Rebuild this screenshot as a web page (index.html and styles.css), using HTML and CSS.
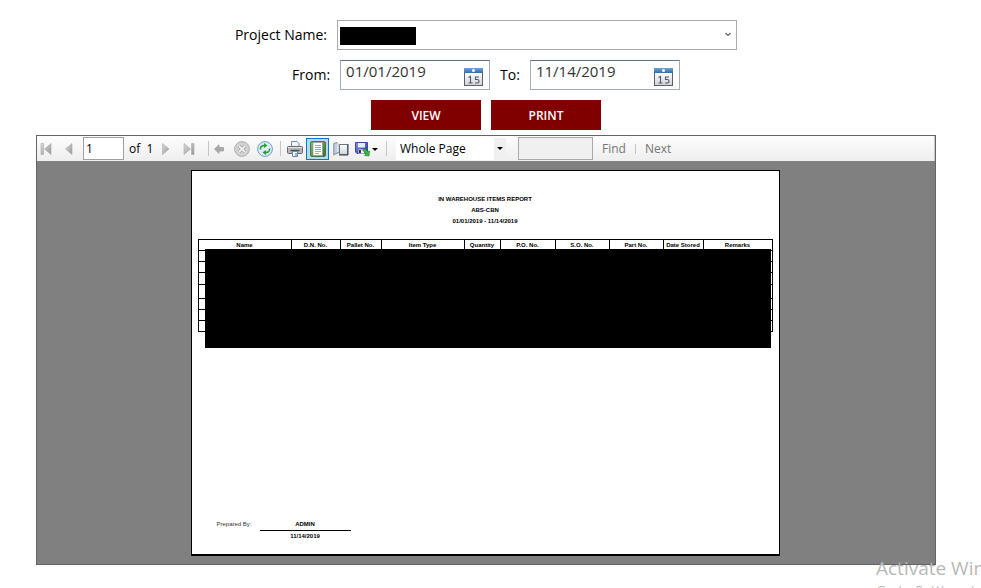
FILE: index.html
```html
<!DOCTYPE html>
<html lang="en">
<head>
<meta charset="utf-8">
<title>In Warehouse Items Report</title>
<link rel="stylesheet" href="styles.css">
</head>
<body>
<svg class="defs" aria-hidden="true">
  <defs>
    <linearGradient id="gray" x1="0" y1="0" x2="1" y2="1"><stop offset="0" stop-color="#dcdcdc"/><stop offset="1" stop-color="#969696"/></linearGradient>
    <linearGradient id="bar" x1="0" y1="0" x2="0" y2="1"><stop offset="0" stop-color="#6fa5d6"/><stop offset="1" stop-color="#336da8"/></linearGradient>
    <linearGradient id="paper" x1="0" y1="0" x2="0" y2="1"><stop offset="0" stop-color="#fff"/><stop offset="1" stop-color="#cfd3d8"/></linearGradient>
    <linearGradient id="green" x1="0" y1="0" x2="1" y2="1"><stop offset="0" stop-color="#8dc178"/><stop offset="1" stop-color="#2f6b2a"/></linearGradient>
    <linearGradient id="disk" x1="0" y1="0" x2="1" y2="1"><stop offset="0" stop-color="#8d95e6"/><stop offset="1" stop-color="#2a2f94"/></linearGradient>
    <symbol id="calendar" viewBox="0 0 19 18">
      <rect x="0.5" y="4.5" width="18" height="13" fill="url(#paper)" stroke="#5c5f64"/>
      <rect width="19" height="5" fill="url(#bar)"/>
      <circle cx="9.5" cy="2.500" r="1.500" fill="#fff"/>
      <path d="M4.500 9.500L6.500 8.500V15M4.500 15H8.500M15 9H11.500V11.500H13.500Q15 11.500 15 13.200T13.500 15H11" fill="none" stroke="#55585d" stroke-width="1.100"/>
    </symbol>
  </defs>
</svg>
<main class="page">
  <form class="filters">
    <div class="row">
      <label for="project">Project Name:</label>
      <div class="project">
        <select id="project"><option></option></select>
        <span class="project-mask"></span>
        <svg class="chevron" width="6" height="5" viewBox="0 0 6 5"><path d="M0.500 1L3 3.500L5.500 1" fill="none" stroke="#606060" stroke-width="1.200"/></svg>
      </div>
    </div>
    <div class="row">
      <label for="from">From:</label>
      <div class="date"><input id="from" type="text" value="01/01/2019"><button type="button" aria-label="Choose start date"><svg width="19" height="18"><use href="#calendar"/></svg></button></div>
      <label for="to">To:</label>
      <div class="date"><input id="to" type="text" value="11/14/2019"><button type="button" aria-label="Choose end date"><svg width="19" height="18"><use href="#calendar"/></svg></button></div>
    </div>
    <div class="row actions">
      <button type="button">VIEW</button>
      <button type="button">PRINT</button>
    </div>
  </form>

  <section class="viewer">
    <div class="toolbar">
      <div class="nav">
        <button type="button" aria-label="First page"><svg width="12" height="14" viewBox="0 0 12 14"><path d="M1 1.500H3.500V12.500H1ZM11 1.500V12.500L4.500 7Z" fill="url(#gray)" stroke="#aaa" stroke-width=".6"/></svg></button>
        <button type="button" aria-label="Previous page"><svg width="12" height="14" viewBox="0 0 12 14"><path d="M9 1.500V12.500L2.500 7Z" fill="url(#gray)" stroke="#aaa" stroke-width=".6"/></svg></button>
        <input class="page-no" type="text" value="1" aria-label="Current page">
        <span class="count">of&nbsp; 1</span>
        <button type="button" aria-label="Next page"><svg width="12" height="14" viewBox="0 0 12 14"><path d="M2.500 1.500V12.500L9 7Z" fill="url(#gray)" stroke="#aaa" stroke-width=".6"/></svg></button>
        <button type="button" aria-label="Last page"><svg width="12" height="14" viewBox="0 0 12 14"><path d="M1 1.500V12.500L7.500 7ZM8.500 1.500H11V12.500H8.500Z" fill="url(#gray)" stroke="#aaa" stroke-width=".6"/></svg></button>
      </div>
      <span class="sep"></span>
      <div class="group">
        <button type="button" aria-label="Back"><svg width="16" height="16" viewBox="0 0 16 16"><path d="M3.500 8L8 3.800V6.500H12.500V10H8V12.500Z" fill="#aaa" stroke="#999" stroke-width=".7"/></svg></button>
        <button type="button" aria-label="Stop"><svg width="16" height="16" viewBox="0 0 16 16"><circle cx="8" cy="8" r="7.400" fill="#d2d2d2" stroke="#b0b0b0"/><path d="M5 5L11 11M11 5L5 11" stroke="#a4a4a4" stroke-width="3.400"/><path d="M5 5L11 11M11 5L5 11" stroke="#f0f0f0" stroke-width="1.800"/></svg></button>
        <button type="button" aria-label="Refresh"><svg width="16" height="16" viewBox="0 0 16 16"><circle cx="8" cy="8" r="7.400" fill="#dcecf9" stroke="#6d9dc9"/><path d="M3.500 8.500C3 5.500 5 4.500 7.500 4.500M12.500 7.500C13 10.500 11 11.500 8.500 11.500" fill="none" stroke="#2c9d30" stroke-width="1.600"/><path d="M7 2L10.500 4.600L7 7ZM9 14L5.500 11.400L9 9Z" fill="#2c9d30"/></svg></button>
      </div>
      <span class="sep"></span>
      <div class="group">
        <button type="button" aria-label="Print"><svg width="16" height="16" viewBox="0 0 16 16"><path d="M4.500 6V.5H10L12 2.500V6Z" fill="#edf5fc" stroke="#7b8998"/><rect x=".5" y="5.500" width="15" height="7" rx="1" fill="#b5b8bc" stroke="#66696f"/><path d="M1 6.500H15" stroke="#e3e4e6"/><path d="M3.500 9.500H12.500" stroke="#4b4e54" stroke-width="1.400"/><path d="M5.500 10.500H10.500V15.500H5.500Z" fill="#eef7ff" stroke="#7189a2"/><path d="M8 12H10V15H8Z" fill="#82b9e7"/></svg></button>
        <button class="active" type="button" aria-label="Print layout" aria-pressed="true"><svg width="16" height="16" viewBox="0 0 16 16"><rect x=".5" y=".5" width="15" height="15" rx="1.500" fill="url(#green)" stroke="#4d7a44"/><path d="M3 1.500H12.500V14.500H3Z" fill="#fff" stroke="#8a9c9c" stroke-width=".7"/><path d="M5 4.500H11M5 6.500H11M5 8.500H11M5 10.500H11M5 12.500H9" stroke="#8096b4" stroke-width=".8"/></svg></button>
        <button type="button" aria-label="Page setup"><svg width="16" height="16" viewBox="0 0 16 16"><path d="M.8 2.500L4 1.500L6 4V11.500L3 12.500L.8 14Z" fill="#c3d1df" stroke="#7d8994"/><path d="M6.500 3.500H14.500V13.500H6.500Z" fill="url(#paper)" stroke="#6b7683"/><path d="M5 2V11" stroke="#eff7ff"/><path d="M15 3V14H6" fill="none" stroke="#364250"/></svg></button>
        <button class="wide" type="button" aria-label="Export"><svg width="24" height="16" viewBox="0 0 24 16"><path d="M.5 1.500H12.500V12.500H2L.5 11Z" fill="url(#disk)" stroke="#4149a5"/><path d="M3 2H10V6.500H3Z" fill="#e6eefc"/><path d="M3.500 8.500H9.500V12.500H3.500Z" fill="#f5f7fc"/><path d="M4 9H6V12H4Z" fill="#293168"/><path d="M7.500 9L10.500 8L12.500 10.500L14.500 10L14 15L9.500 14.500L11 13Z" fill="#36bc36" stroke="#178720" stroke-width=".6"/><path d="M17 7H23L20 10Z" fill="#000"/></svg></button>
      </div>
      <span class="sep"></span>
      <div class="zoom">
        <select aria-label="Zoom"><option>Whole Page</option></select>
        <span class="zoom-arrow"><svg width="6" height="3" viewBox="0 0 6 3"><path d="M0 0H6L3 3Z"/></svg></span>
      </div>
      <input class="search" type="text" aria-label="Find text" disabled>
      <div class="find"><a href="#find">Find</a><span></span><a href="#next">Next</a></div>
    </div>

    <div class="canvas">
      <article class="sheet">
        <header class="title">
          <p>IN WAREHOUSE ITEMS REPORT</p>
          <p>ABS-CBN</p>
          <p>01/01/2019 - 11/14/2019</p>
        </header>
        <div class="table-wrap">
          <table>
            <colgroup><col class="c-name"><col class="c-dn"><col class="c-pallet"><col class="c-type"><col class="c-qty"><col class="c-po"><col class="c-so"><col class="c-part"><col class="c-date"><col class="c-rem"></colgroup>
            <thead><tr><th>Name</th><th>D.N. No.</th><th>Pallet No.</th><th>Item Type</th><th>Quantity</th><th>P.O. No.</th><th>S.O. No.</th><th>Part No.</th><th>Date Stored</th><th>Remarks</th></tr></thead>
            <tbody>
              <tr><td colspan="10"></td></tr>
              <tr><td colspan="10"></td></tr>
              <tr class="medium"><td colspan="10"></td></tr>
              <tr class="tall"><td colspan="10"></td></tr>
              <tr><td colspan="10"></td></tr>
              <tr><td colspan="10"></td></tr>
              <tr><td colspan="10"></td></tr>
            </tbody>
          </table>
          <div class="table-mask"></div>
        </div>
        <footer class="signed">
          <span>Prepared By:</span>
          <div class="signature"><p>ADMIN</p><p>11/14/2019</p></div>
        </footer>
      </article>
    </div>
  </section>
</main>
<aside class="watermark"><p>Activate Windows</p><small>Go to Settings to activate Windows.</small></aside>
</body>
</html>
```

FILE: styles.css
```css
* { box-sizing: border-box; }
html, body { height: 100%; }
body {
  margin: 0;
  background: #fff;
  color: #000;
  font: 14px/20px "Open Sans", "Noto Sans", sans-serif;
  overflow: hidden;
}
p { margin: 0; }
button, input, select { font: inherit; color: inherit; margin: 0; }
svg { display: block; }
.defs { position: absolute; width: 0; height: 0; }

.page {
  display: flex;
  flex-direction: column;
  min-height: 100%;
  padding: 20px 45px 23px 36px;
}

.filters {
  display: flex;
  flex-direction: column;
  gap: 10px;
  margin-bottom: 5px;
}
.row { display: flex; justify-content: center; align-items: center; gap: 10px; }
.project { position: relative; width: 400px; }
.project select {
  display: block;
  width: 100%;
  height: 30px;
  border: 1px solid #acacb0;
  background: #fff;
  appearance: none;
}
.project-mask { position: absolute; left: 3px; top: 7px; width: 76px; height: 18px; background: #000; }
.chevron { position: absolute; right: 6px; top: 12px; }

.date {
  display: flex;
  width: 150px;
  height: 30px;
  padding: 0 6px 0 5px;
  border: 1px solid #a3aeb9;
  border-top-color: #5d7487;
  align-items: flex-start;
}
.date input {
  flex: 1;
  min-width: 0;
  height: 20px;
  padding: 0;
  border: 0;
  color: #333;
  font-size: 15px;
  outline: 0;
}
.date button { margin-top: 7px; padding: 0; border: 0; background: none; }

.actions button {
  width: 110px;
  height: 30px;
  padding: 1px 0 0;
  border: 0;
  background: #800000;
  color: #fff;
  font-size: 12px;
  font-weight: 600;
}

.viewer {
  display: flex;
  flex: 1;
  flex-direction: column;
  border: 1px solid #646464;
  background: #808080;
}
.toolbar {
  display: flex;
  align-items: center;
  height: 25px;
  border-right: 1px solid #c8c8c8;
  background: linear-gradient(#fdfdfd, #eee);
  font-size: 12px;
  line-height: 16px;
}
.toolbar button {
  display: flex;
  align-items: center;
  justify-content: center;
  padding: 0;
  border: 0;
  background: none;
}
.nav { display: flex; align-items: center; gap: 5px; }
.nav button { width: 18px; height: 23px; }
.page-no {
  width: 41px;
  height: 23px;
  padding: 0 2px;
  border: 1px solid #a0a0a0;
  background: #fff;
}
.count { width: 23px; white-space: nowrap; }
.sep { width: 1px; height: 15px; margin: 0 10px; background: #c5c5c5; }
.group { display: flex; }
.sep + .group { margin-left: -12px; }
.group + .sep { margin: 0 14px 0 4px; }
.group button { width: 23px; height: 22px; }
.group .wide { width: 30px; }
.group .active { border: 1px solid #0078d7; background: #b9d9f2; }
.group:has(.wide) + .sep { margin: 0 9px 0 4px; }
.zoom { position: relative; width: 110px; height: 22px; background: #fff; }
.zoom select { width: 100%; height: 100%; padding: 0 4px; border: 0; background: none; appearance: none; }
.zoom-arrow {
  position: absolute;
  top: 0;
  right: 0;
  display: flex;
  align-items: center;
  justify-content: center;
  width: 12px;
  height: 22px;
  background: #f0f0f0;
  pointer-events: none;
}
.search { width: 75px; height: 23px; margin: 0 9px 0 12px; border: 1px solid #a9a9a9; background: #f0f0f0; }
.find { display: flex; align-items: center; gap: 9px; }
.find a { color: #767676; text-decoration: none; }
.find span { width: 1px; height: 10px; background: #c5c5c5; }

.canvas { display: flex; flex: 1; justify-content: center; padding: 9px 2px 8px 0; }
.sheet {
  display: flex;
  flex-direction: column;
  width: 589px;
  padding: 23px 6px 12px;
  border: 1px solid #000;
  border-bottom-width: 2px;
  background: #fff;
  font: bold 6px/11px "Liberation Sans", Arial, sans-serif;
}
.title { margin-bottom: 12px; text-align: center; }
.table-wrap { position: relative; }
table { width: 100%; border-collapse: collapse; table-layout: fixed; }
th, td { height: 11px; padding: 0; border: 1px solid #000; }
th { line-height: 10px; white-space: nowrap; }
.medium td { height: 12px; }
.tall td { height: 14px; }
.c-name { width: 93px; }
.c-dn { width: 49px; }
.c-pallet { width: 41px; }
.c-type { width: 83px; }
.c-qty { width: 36px; }
.c-po { width: 55px; }
.c-so, .c-part { width: 54px; }
.c-date { width: 40px; }
.table-mask { position: absolute; left: 7px; right: 2px; top: 10px; height: 99px; background: #000; }
.signed { display: flex; gap: 8px; margin-top: auto; padding-left: 19px; }
.signed span { font-weight: normal; color: #333; }
.signature { width: 91px; text-align: center; }
.signature p:first-child { border-bottom: 1px solid #000; }

.watermark {
  position: absolute;
  left: 876px;
  right: 0;
  top: 555px;
  bottom: 0;
  overflow: hidden;
  color: #b8b8b8;
  white-space: nowrap;
  font-size: 19px;
  line-height: 26px;
}
.watermark small { display: block; font-size: 14px; line-height: 20px; }
```
